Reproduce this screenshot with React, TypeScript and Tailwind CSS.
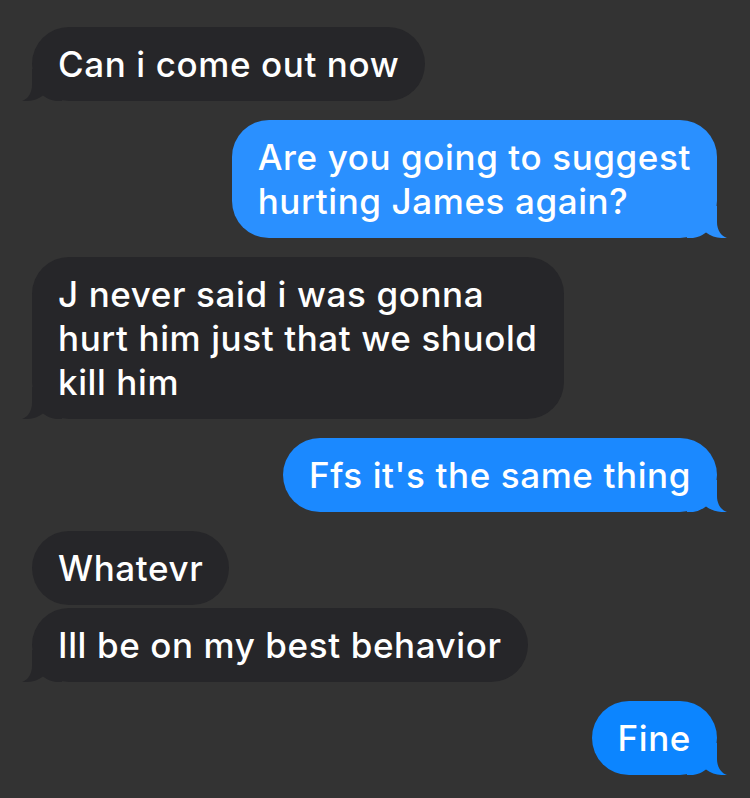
import React from "react";

type Side = "in" | "out";

interface Msg {
  side: Side;
  lines: string[];
  tail?: boolean;
  color?: string;
  gapTop?: string;
}

const messages: Msg[] = [
  { side: "in", lines: ["Can i come out now"], tail: true },
  { side: "out", lines: ["Are you going to suggest", "hurting James again?"], tail: true, color: "#2a90ff" },
  { side: "in", lines: ["J never said i was gonna", "hurt him just that we shuold", "kill him"], tail: true },
  { side: "out", lines: ["Ffs it's the same thing"], tail: true, color: "#1b89ff" },
  { side: "in", lines: ["Whatevr"] },
  { side: "in", lines: ["Ill be on my best behavior"], tail: true, gapTop: "mt-[-16px]" },
  { side: "out", lines: ["Fine"], tail: true, color: "#0c85ff" },
];

function Tail({ side, color }: { side: Side; color: string }) {
  return (
    <svg
      width="40"
      height="32"
      viewBox="0 0 40 32"
      className={`absolute bottom-0 ${side === "in" ? "left-[-10px]" : "right-[-10px] -scale-x-100"}`}
    >
      <path
        d="M10 0 L10 16 C10 24 6 30 0 32 C8 32.5 15 31 21 26.5 Q27 31 34 32 L40 32 L40 0 Z"
        fill={color}
      />
    </svg>
  );
}

function Bubble({ msg }: { msg: Msg }) {
  const bg = msg.side === "in" ? "#262629" : msg.color ?? "#1b89ff";
  return (
    <div className={`flex ${msg.side === "in" ? "justify-start" : "justify-end"} ${msg.gapTop ?? ""}`}>
      <div
        className="relative rounded-[37px] px-[26px] py-[15px] text-[35px] leading-[44px] font-medium text-white tracking-[0.6px]"
        style={{ backgroundColor: bg }}
      >
        {msg.tail && <Tail side={msg.side} color={bg} />}
        <div className="relative">
          {msg.lines.map((l, i) => (
            <div key={i} className="whitespace-nowrap">
              {l}
            </div>
          ))}
        </div>
      </div>
    </div>
  );
}

export default function App() {
  return (
    <div
      className="w-[750px] h-[798px] overflow-hidden bg-[#333333] pt-[27px] pl-[32px] pr-[33px] flex flex-col gap-[19px]"
      style={{ fontFamily: "Inter, 'Noto Sans', sans-serif" }}
    >
      {messages.map((m, i) => (
        <Bubble key={i} msg={m} />
      ))}
    </div>
  );
}
